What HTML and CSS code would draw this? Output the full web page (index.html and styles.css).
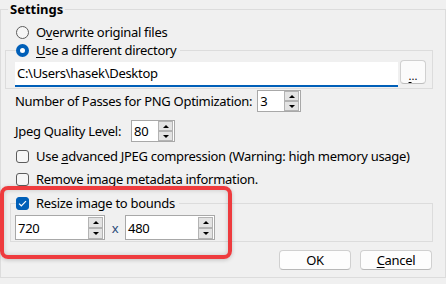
FILE: index.html
```html
<!DOCTYPE html>
<html lang="en">
<head>
  <meta charset="UTF-8" />
  <title>Settings</title>
  <link rel="stylesheet" href="styles.css">
</head>
<body>

  <fieldset class="group settings">
    <legend class="group-title">Settings</legend>

    <div class="opt first">
      <span class="radio"></span>
      <span>O<u>v</u>erwrite original files</span>
    </div>

    <!-- Directory group -->
    <fieldset class="group dir">
      <legend class="opt-legend">
        <span class="opt">
          <span class="radio on"></span>
          <span><u>U</u>se a different directory</span>
        </span>
      </legend>
      <div class="path-row">
        <div class="path">C:\Users\hasek\Desktop</div>
        <button class="browse"><u>.</u>..</button>
      </div>
    </fieldset>

    <div class="field passes">
      <span>Number of Passes for PNG Optimization:</span>
      <div class="spin small">
        <span class="val">3</span>
        <span class="arrows"><span class="up"></span><span class="down"></span></span>
      </div>
    </div>

    <div class="field quality">
      <span>Jpeg Quality Level:</span>
      <div class="spin small">
        <span class="val">80</span>
        <span class="arrows"><span class="up"></span><span class="down"></span></span>
      </div>
    </div>

    <div class="opt check-row">
      <span class="check"></span>
      <span>Use <u>a</u>dvanced JPEG compression (Warning: high memory usage)</span>
    </div>

    <div class="opt check-row">
      <span class="check"></span>
      <span><u>R</u>emove image metadata information.</span>
    </div>

    <!-- Resize group -->
    <fieldset class="group resize">
      <legend class="opt-legend">
        <span class="opt">
          <span class="check on">
            <svg width="9" height="7" viewBox="0 0 9 7"><path d="M1 3.6 L3.3 5.8 L8 1.1" fill="none" stroke="#fff" stroke-width="1.2"/></svg>
          </span>
          <span>Resize image to bounds</span>
        </span>
      </legend>
      <div class="size-row">
        <div class="spin wide">
          <span class="val">720</span>
          <span class="arrows"><span class="up"></span><span class="down"></span></span>
        </div>
        <span class="times">x</span>
        <div class="spin wide">
          <span class="val">480</span>
          <span class="arrows"><span class="up"></span><span class="down"></span></span>
        </div>
      </div>
    </fieldset>

    <div class="buttons">
      <button class="btn">OK</button>
      <button class="btn"><u>C</u>ancel</button>
    </div>
  </fieldset>

  <!-- red highlight drawn over the resize group -->
  <div class="highlight"></div>

</body>
</html>
```

FILE: styles.css
```css
* {
  box-sizing: border-box;
}

body {
  margin: 0;
  padding-top: 2px;
  width: 446px;
  height: 284px;
  overflow: hidden;
  background-color: #f0f0f0;
  font-family: 'Noto Sans', sans-serif;
  font-size: 13px;
  letter-spacing: -0.3px;
  color: #000;
  position: relative;
}

u {
  text-decoration-thickness: 1px;
  text-underline-offset: 2px;
}

/* Group boxes */
.group {
  margin: 0;
  border: 1px solid #dcdcdc;
  min-width: 0;
}

.settings {
  width: 446px;
  padding: 7px 12px 7px 14px;
}

.group-title {
  font-weight: bold;
  line-height: 14px;
  padding: 0 2px;
  margin-left: -7px;
  letter-spacing: 0;
}

.opt-legend {
  padding: 0 4px 0 0;
  line-height: 18px;
}

.opt {
  display: flex;
  align-items: center;
  gap: 7px;
  height: 18px;
  line-height: 18px;
  white-space: nowrap;
}

.opt.first {
  margin-left: 1px;
}

/* Radio buttons */
.radio {
  width: 13px;
  height: 13px;
  border: 1px solid #5c5c5c;
  border-radius: 50%;
  background-color: #f6f6f6;
  flex-shrink: 0;
}

.radio.on {
  border: 4px solid #005fb8;
  background-color: #fff;
}

/* Checkboxes */
.check {
  width: 13px;
  height: 13px;
  border: 1px solid #5c5c5c;
  border-radius: 3px;
  background-color: #f6f6f6;
  flex-shrink: 0;
  display: flex;
  align-items: center;
  justify-content: center;
}

.check.on {
  background-color: #005fb8;
  border-color: #005fb8;
}

.check-row {
  margin-left: 1px;
  margin-top: 5px;
}

/* Directory group */
.dir {
  margin-left: -10px;
  padding: 1px 6px 1px 9px;
}

.dir .opt-legend {
  margin-left: 1px;
}

.path-row {
  display: flex;
  align-items: flex-start;
  gap: 2px;
}

.path {
  flex: 1;
  height: 25px;
  margin-top: 2px;
  background-color: #fff;
  border-bottom: 2px solid #005fb8;
  padding-left: 2px;
  line-height: 23px;
}

.browse {
  width: 26px;
  height: 24px;
  padding: 0 0 2px;
  background-color: #fbfbfb;
  border: 1px solid #d0d0d0;
  border-bottom-color: #bdbdbd;
  border-radius: 4px;
  font-family: inherit;
  font-size: 11px;
  line-height: 1;
  display: flex;
  align-items: flex-end;
  justify-content: center;
}

/* Labeled fields */
.field {
  display: flex;
  align-items: center;
  gap: 5px;
  white-space: nowrap;
}

.passes {
  margin-top: 1px;
}

.quality {
  margin-top: 8px;
  gap: 10px;
}

/* Spin boxes */
.spin {
  display: flex;
  align-items: center;
  background-color: #fff;
  border: 1px solid #a8a8a8;
  padding: 0 1px 0 2px;
}

.spin.small {
  width: 44px;
  height: 22px;
}

.spin.wide {
  width: 90px;
  height: 25px;
}

.spin .val {
  flex: 1;
  line-height: 18px;
}

.arrows {
  display: flex;
  flex-direction: column;
}

.arrows span {
  width: 15px;
  height: 10px;
  background-color: #e3e3e3;
  border: 1px solid #b3b3b3;
  display: flex;
  align-items: center;
  justify-content: center;
}

.spin.wide .arrows span {
  height: 11px;
}

.arrows .up::after {
  content: '';
  border-left: 3px solid transparent;
  border-right: 3px solid transparent;
  border-bottom: 3px solid #000;
}

.arrows .down::after {
  content: '';
  border-left: 3px solid transparent;
  border-right: 3px solid transparent;
  border-top: 3px solid #000;
}

/* Resize group */
.resize {
  margin-top: 6px;
  margin-left: -5px;
  padding: 3px 6px 1px 4px;
}

.resize .opt-legend {
  margin-left: 1px;
}

.size-row {
  display: flex;
  align-items: center;
}

.times {
  width: 20px;
  text-align: center;
  color: #2b4a78;
}

/* Dialog buttons */
.buttons {
  display: flex;
  justify-content: flex-end;
  gap: 9px;
  margin-top: 8px;
  margin-right: 1px;
}

.btn {
  width: 72px;
  height: 20px;
  padding: 0;
  background-color: #fdfdfd;
  border: 1px solid #d0d0d0;
  border-bottom-color: #b8b8b8;
  border-radius: 4px;
  font-family: inherit;
  font-size: 13px;
  letter-spacing: inherit;
  line-height: 18px;
  color: #000;
}

/* Red annotation box */
.highlight {
  position: absolute;
  left: 0;
  top: 186px;
  width: 232px;
  height: 73px;
  border: 4px solid #ee3b3e;
  border-radius: 8px;
  box-shadow: inset 0 0 5px rgba(0,0,0,0.18), 0 1px 4px rgba(0,0,0,0.2);
}
```
